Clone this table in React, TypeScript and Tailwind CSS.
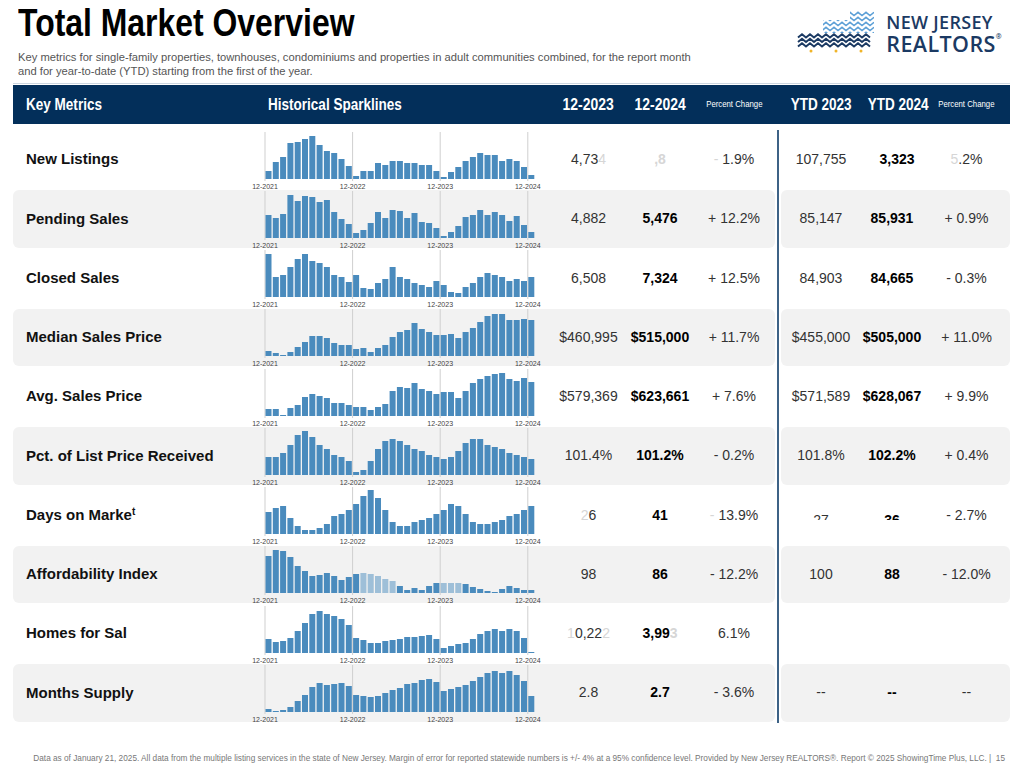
import React from 'react';

// --- sparkline data (bar heights in px, max ~43), 12-2021 .. 12-2024 ---
const S = {
  newL: [8,17,22,36,37,40,43,34,28,26,20,13, 3,8,8,16,14,18,18,16,16,14,14,8, 2,7,12,18,22,26,24,24,18,20,18,12,4],
  pend: [23,20,24,43,37,42,41,36,38,26,19,14, 5,8,15,26,20,28,27,20,25,16,15,10, 2,6,12,21,23,28,23,26,23,17,22,13,6],
  closed: [43,20,22,30,38,43,36,34,30,22,20,15, 22,9,8,14,18,30,20,18,14,12,10,16, 12,5,4,10,14,20,24,22,20,16,18,16,20],
  median: [5,3,1,4,9,14,20,20,18,13,11,11, 7,8,4,8,11,19,24,26,33,27,24,21, 21,22,18,24,28,34,40,42,42,36,36,37,36],
  avg: [7,7,1,8,11,19,22,20,18,13,13,11, 9,9,6,9,12,25,29,28,33,27,25,22, 24,24,18,25,33,37,40,42,43,37,35,38,34],
  pct: [18,18,22,30,40,44,38,30,26,20,18,14, 3,5,14,26,34,36,34,30,26,24,20,18, 16,18,24,32,36,36,30,28,26,22,20,18,16],
  dom: [22,26,28,16,8,4,4,6,10,18,20,24, 30,38,44,36,24,12,8,8,12,14,16,20, 24,30,28,20,12,10,10,12,14,18,20,24,28],
  afford: [37,43,42,36,27,22,17,18,20,17,13,16, 19,20,19,17,14,12,7,3,5,3,7,10, 10,10,10,9,6,4,2,1,4,7,5,3,3],
  homes: [14,11,12,15,22,30,39,42,39,37,34,28, 15,13,10,10,12,13,14,16,16,17,18,14, 5,7,9,10,14,19,22,24,22,24,22,15,1],
  months: [3,1,2,5,11,17,25,29,27,28,29,26, 17,16,15,16,19,22,24,28,29,32,33,30, 21,23,25,27,31,35,39,41,39,41,37,31,16],
};

const YEARS = ['12-2021','12-2022','12-2023','12-2024'];

function Spark({ data, ghost = [] }: { data: number[]; ghost?: number[] }) {
  const step = 7.3;
  return (
    <svg width={290} height={59} className="block overflow-visible">
      {YEARS.map((_, k) => (
        <line key={k} x1={10 + k * 12 * step} x2={10 + k * 12 * step} y1={1} y2={50} stroke="#cfcfcf" strokeWidth={1} />
      ))}
      {data.map((v, i) => (
        <rect key={i} x={10 + i * step + 0.5} y={48 - v} width={6} height={v} fill="#4a8bbd" opacity={ghost.includes(i) ? 0.5 : 1} />
      ))}
      {YEARS.map((y, k) => (
        <text key={y} x={10 + k * 12 * step} y={58} fontSize={7} textAnchor="middle" fill="#444" fontFamily="Liberation Sans, Arial, sans-serif">{y}</text>
      ))}
    </svg>
  );
}

const F = ({ children }: { children: React.ReactNode }) => <span className="text-[#d6d6d6]">{children}</span>;
const Cut = ({ children }: { children: React.ReactNode }) => <span className="inline-block h-[8px] overflow-hidden align-middle leading-[16px]">{children}</span>;
// condensed look: the installed faces have no narrow cut, so squeeze horizontally
const N = ({ children, left }: { children: React.ReactNode; left?: boolean }) => (
  <span className={`inline-block whitespace-nowrap scale-x-[0.82] ${left ? 'origin-left' : 'origin-center'}`}>{children}</span>
);

type Row = { label: React.ReactNode; data: number[]; ghost?: number[]; c: React.ReactNode[] };

const ROWS: Row[] = [
  { label: 'New Listings', data: S.newL, c: [<>4,73<F>4</F></>, <F>,8</F>, <><F>-</F> 1.9%</>, '107,755', <span className="pl-[10px]">3,323</span>, <><F>5</F>.2%</>] },
  { label: 'Pending Sales', data: S.pend, c: ['4,882', '5,476', '+ 12.2%', '85,147', '85,931', '+ 0.9%'] },
  { label: 'Closed Sales', data: S.closed, c: ['6,508', '7,324', '+ 12.5%', '84,903', '84,665', '- 0.3%'] },
  { label: 'Median Sales Price', data: S.median, c: ['$460,995', '$515,000', '+ 11.7%', '$455,000', '$505,000', '+ 11.0%'] },
  { label: 'Avg. Sales Price', data: S.avg, c: ['$579,369', '$623,661', '+ 7.6%', '$571,589', '$628,067', '+ 9.9%'] },
  { label: 'Pct. of List Price Received', data: S.pct, c: ['101.4%', '101.2%', '- 0.2%', '101.8%', '102.2%', '+ 0.4%'] },
  { label: <>Days on Marke<span className="text-[10px] align-top">t</span></>, data: S.dom, c: [<><F>2</F>6</>, '41', <><F>-</F> 13.9%</>, <Cut>27</Cut>, <Cut>36</Cut>, '- 2.7%'] },
  { label: 'Affordability Index', data: S.afford, ghost: [13,14,15,16,17,24,25,26], c: ['98', '86', '- 12.2%', '100', '88', '- 12.0%'] },
  { label: 'Homes for Sal', data: S.homes, c: [<><F>1</F>0,22<F>2</F></>, <>3,99<F>3</F></>, '6.1%', '', '', ''] },
  { label: 'Months Supply', data: S.months, c: ['2.8', '2.7', '- 3.6%', '--', '--', '--'] },
];

function zig(y: number, x0: number, x1: number, p = 8, a = 3.2) {
  const pts: string[] = [];
  let up = false;
  for (let x = x0; x <= x1 + 0.01; x += p / 2) { pts.push(`${x},${up ? y - a : y}`); up = !up; }
  return pts.join(' ');
}

function Logo() {
  return (
    <div className="flex items-start gap-[8px]">
      <svg width={82} height={46} viewBox="0 0 82 46">
        <defs>
          <clipPath id="stairs"><polygon points="27,12 54,12 54,3 78,3 78,25 27,25" /></clipPath>
        </defs>
        <g clipPath="url(#stairs)" stroke="#5b9fd6" strokeWidth={1.5} fill="none">
          {[7.5, 12.5, 17.5, 22.5, 27.5].map(y => <polyline key={y} points={zig(y, 26, 80)} />)}
        </g>
        <g stroke="#1b3a63" strokeWidth={2} fill="none">
          {[29.5, 34, 38.5].map(y => <polyline key={y} points={zig(y, 2, 76)} />)}
        </g>
        {[15, 40, 65].map(x => <circle key={x} cx={x} cy={43} r={1.5} fill="#f0b429" />)}
      </svg>
      <div className="text-[#1b3a63] font-['Open_Sans','Liberation_Sans',sans-serif] font-semibold leading-none">
        <div className="text-[18px] tracking-[0.3px] mt-[5px]">NEW JERSEY</div>
        <div className="text-[21.5px] tracking-[0.4px] mt-[2px] whitespace-nowrap">REALTORS<span className="text-[7px] align-top">®</span></div>
      </div>
    </div>
  );
}

export default function App() {
  return (
    <div className="w-[1024px] h-[767px] bg-white overflow-hidden font-['Liberation_Sans',Arial,sans-serif] text-[#222]">
      <div className="flex justify-between">
        <div className="pl-[18px]">
          <div className="font-bold text-[38px] leading-none pt-[4px] text-black whitespace-nowrap">
            <span className="inline-block scale-x-[0.84] origin-left">Total Market Overview</span>
          </div>
          <div className="mt-[8px] text-[11.2px] leading-[14px] text-[#555] whitespace-nowrap">
            Key metrics for single-family properties, townhouses, condominiums and properties in adult communities combined, for the report month<br />
            and for year-to-date (YTD) starting from the first of the year.
          </div>
        </div>
        <div className="pt-[8px] pr-[22px]"><Logo /></div>
      </div>

      <div className="ml-[13px] w-[997px]">
        <div className="mt-[5px] h-px bg-[#cdd6e0]" />
        <div className="mt-[1px] h-[39px] bg-[#032f5a] text-white font-bold flex items-center text-[16.5px]">
          <div className="w-[232px] pl-[13px]"><N left>Key Metrics</N></div>
          <div className="w-[308px] pl-[23px]"><N left>Historical Sparklines</N></div>
          <div className="w-[71px] text-center text-[17px]"><N>12-2023</N></div>
          <div className="w-[72px] text-center text-[17px]"><N>12-2024</N></div>
          <div className="w-[79px] pr-[3px] text-center text-[9.5px] font-normal"><N>Percent Change</N></div>
          <div className="w-[6px]" />
          <div className="w-[80px] text-center"><N>YTD 2023</N></div>
          <div className="w-[62px] text-center"><N>YTD 2024</N></div>
          <div className="w-[87px] text-center text-[9.5px] font-normal"><N>Percent Change</N></div>
        </div>

        <div className="mt-[6px] flex">
          <div className="w-[762px] flex flex-col">
            {ROWS.map((r, i) => (
              <div key={i} className="h-[59.25px] py-[1px]">
                <div className={`h-full flex items-center rounded-md ${i % 2 ? 'bg-[#f2f2f2]' : ''}`}>
                  <div className="w-[232px] pl-[13px] text-[15px] font-bold text-[#111]">{r.label}</div>
                  <div className="w-[308px] h-full flex items-start pl-[10px] -mt-[1px]"><Spark data={r.data} ghost={r.ghost} /></div>
                  <div className="w-[71px] text-center text-[14px] text-[#333]">{r.c[0]}</div>
                  <div className="w-[72px] text-center text-[14px] font-bold text-black">{r.c[1]}</div>
                  <div className="w-[79px] pr-[3px] text-center text-[14px] text-[#333]">{r.c[2]}</div>
                </div>
              </div>
            ))}
          </div>
          <div className="w-[6px] flex justify-center"><div className="w-[2px] h-full bg-[#3d6286]" /></div>
          <div className="w-[229px] flex flex-col">
            {ROWS.map((r, i) => (
              <div key={i} className="h-[59.25px] py-[1px]">
                <div className={`h-full flex items-center rounded-md ${i % 2 ? 'bg-[#f2f2f2]' : ''}`}>
                  <div className="w-[80px] text-center text-[14px] text-[#333]">{r.c[3]}</div>
                  <div className="w-[62px] text-center text-[14px] font-bold text-black">{r.c[4]}</div>
                  <div className="w-[87px] text-center text-[14px] text-[#333]">{r.c[5]}</div>
                </div>
              </div>
            ))}
          </div>
        </div>
      </div>

      <div className="mt-[31px] pr-[19px] text-right text-[8.25px] leading-[10px] text-[#777] whitespace-nowrap">
        Data as of January 21, 2025. All data from the multiple listing services in the state of New Jersey. Margin of error for reported statewide numbers is +/- 4% at a 95% confidence level. Provided by New Jersey REALTORS®. Report © 2025 ShowingTime Plus, LLC. |&nbsp; 15
      </div>
    </div>
  );
}
